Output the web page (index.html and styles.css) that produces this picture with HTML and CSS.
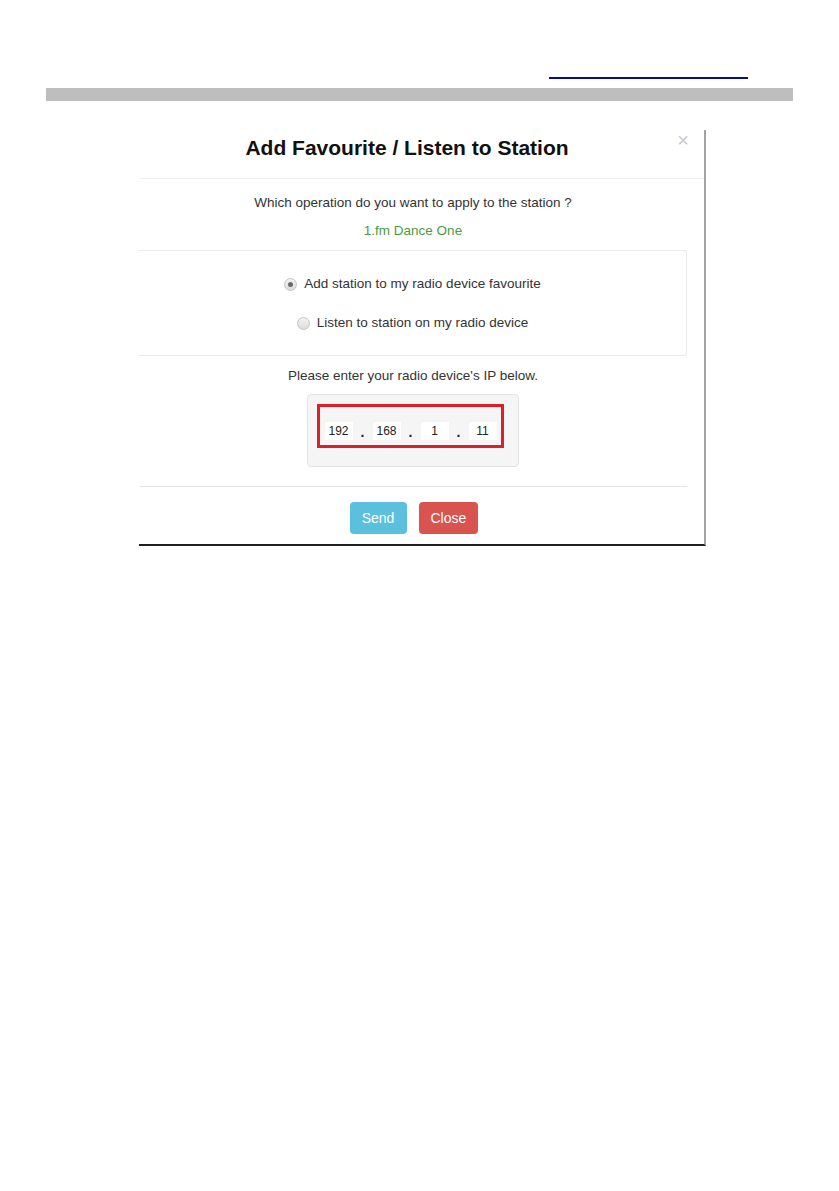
FILE: index.html
```html
<!DOCTYPE html>
<html lang="en">
<head>
<meta charset="UTF-8">
<meta name="viewport" content="width=device-width, initial-scale=1.0">
<title>Add Favourite / Listen to Station</title>
<link rel="stylesheet" href="styles.css">
</head>
<body>
<div class="page">
  <div class="linkRow"><a class="docLink" href="#"></a></div>
  <div class="greyBar"></div>

  <div class="shot">
    <div class="modalHeader">
      <h4 class="modalTitle">Add Favourite / Listen to Station</h4>
      <span class="closeX">&times;</span>
    </div>
    <div class="modalBody">
      <p class="question">Which operation do you want to apply to the station ?</p>
      <p class="stationName">1.fm Dance One</p>
      <div class="choicePanel">
        <label class="choice"><span class="radio checked"></span>Add station to my radio device favourite</label>
        <label class="choice"><span class="radio"></span>Listen to station on my radio device</label>
      </div>
      <p class="ipHint">Please enter your radio device's IP below.</p>
      <div class="well">
        <div class="ipBox">
          <span class="ipPart">192</span><span class="ipDot">.</span>
          <span class="ipPart">168</span><span class="ipDot">.</span>
          <span class="ipPart">1</span><span class="ipDot">.</span>
          <span class="ipPart">11</span>
        </div>
      </div>
    </div>
    <div class="modalFooter">
      <button class="btn btnSend">Send</button>
      <button class="btn btnClose">Close</button>
    </div>
  </div>
</div>
</body>
</html>
```

FILE: styles.css
```css
body {
  margin: 0;
  padding: 0;
  background-color: #fff;
  font-family: "Liberation Sans", Arial, sans-serif;
  color: #333;
}
.page {
  padding: 0 46px 0 46px;
}
.linkRow {
  display: flex;
  justify-content: flex-end;
  padding-top: 77px;
  padding-right: 45px;
}
.docLink {
  display: block;
  width: 199px;
  height: 0;
  border-bottom: 2px solid #0a0a8c;
}
.greyBar {
  margin-top: 9px;
  width: 747px;
  height: 13px;
  background-color: #bebebe;
}

/* the clipped dialog screenshot */
.shot {
  margin-top: 29px;
  margin-left: 93px;
  width: 565px;
  border-right: 2px solid #a3a3a3;
  border-bottom: 2px solid #1e1e1e;
  background-color: #fff;
}
.modalHeader {
  position: relative;
  height: 48px;
  border-bottom: 1px solid #eee;
  margin-left: 1px;
}
.modalTitle {
  margin: 0;
  padding: 6px 30px 0 0;
  line-height: 24px;
  font-size: 21px;
  font-weight: bold;
  color: #111;
  text-align: center;
}
.closeX {
  position: absolute;
  top: 0;
  right: 15px;
  font-size: 20px;
  line-height: 20px;
  color: #c8c8c8;
}
.modalBody {
  margin-right: 17px;
  text-align: center;
  font-size: 13.5px;
}
.modalBody p {
  margin: 0;
  line-height: 20px;
}
.question {
  padding-top: 14px;
}
.stationName {
  margin-top: 8px !important;
  color: #4e9a3f;
}
.choicePanel {
  margin-top: 9px;
  padding: 23px 0 22px;
  display: flex;
  flex-direction: column;
  align-items: center;
  gap: 19px;
  border: 1px solid #ebebeb;
  border-left: none;
  border-radius: 0 3px 3px 0;
}
.choice {
  display: flex;
  align-items: center;
  gap: 7px;
  line-height: 20px;
}
.radio {
  width: 11px;
  height: 11px;
  border-radius: 50%;
  border: 1px solid #c4c4c4;
  background: linear-gradient(#f2f2f2, #dcdcdc);
  display: flex;
  align-items: center;
  justify-content: center;
}
.radio.checked::after {
  content: "";
  width: 5px;
  height: 5px;
  border-radius: 50%;
  background-color: #6a6a6a;
}
.ipHint {
  margin-top: 10px !important;
}
.well {
  margin: 8px auto 0;
  width: 212px;
  box-sizing: border-box;
  padding: 9px 14px 18px 9px;
  background-color: #f5f5f5;
  border: 1px solid #e3e3e3;
  border-radius: 4px;
}
.ipBox {
  height: 44px;
  box-sizing: border-box;
  border: 3px solid #d9202b;
  display: flex;
  align-items: flex-end;
  justify-content: center;
  padding: 0 0 5px 0;
  gap: 7px;
}
.ipPart {
  width: 28px;
  height: 18px;
  line-height: 18px;
  background-color: #fff;
  font-size: 12px;
  color: #222;
  text-align: center;
}
.ipDot {
  width: 6px;
  font-size: 14px;
  font-weight: bold;
  line-height: 15px;
  color: #222;
}
.modalFooter {
  margin-top: 19px;
  margin-right: 17px;
  margin-left: 1px;
  border-top: 1px solid #e5e5e5;
  padding: 15px 0 10px;
  display: flex;
  justify-content: center;
  gap: 12px;
}
.btn {
  height: 32px;
  padding: 0 12px;
  border: none;
  border-radius: 4px;
  font-family: "Liberation Sans", Arial, sans-serif;
  font-size: 14px;
  color: #fff;
}
.btnSend {
  width: 57px;
  background-color: #5bc0de;
}
.btnClose {
  width: 59px;
  background-color: #d9534f;
}
```
